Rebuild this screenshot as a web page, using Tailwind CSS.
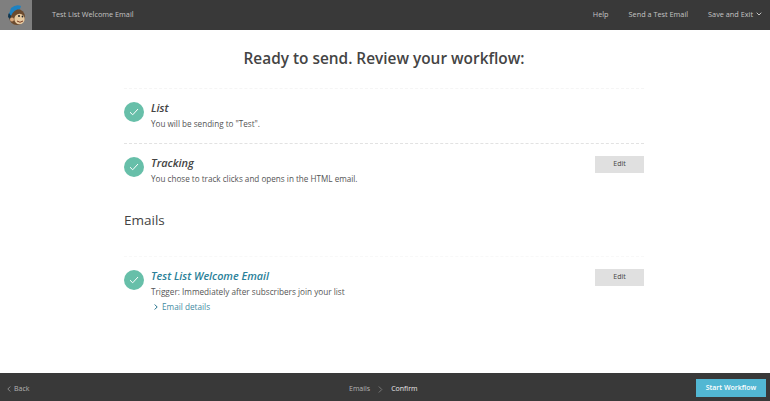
<!DOCTYPE html>
<html lang="en">
  <head>
    <meta charset="UTF-8" />
    <title>Test List Welcome Email</title>
    <script src="https://cdn.jsdelivr.net/npm/@tailwindcss/browser@4"></script>
  </head>
  <body class="font-['Open_Sans',sans-serif] bg-white text-[#444]">
    <div class="flex flex-col h-[401px] w-[770px] overflow-hidden">
      <!-- top bar -->
      <header class="flex items-center h-[30px] bg-[#393939] text-[7.3px] text-[#c4c4c4] shrink-0">
        <div class="flex items-center justify-center w-[32px] h-full bg-[#7f7f7f]">
          <svg width="22" height="24" viewBox="0 0 22 24">
            <circle cx="12" cy="14" r="8" fill="#6b4a2e" />
            <circle cx="14.5" cy="16" r="5.2" fill="#e6c9a0" />
            <path d="M4 11 L6 5 Q11 1 16 3 L15 6 Q9 6 6 13 Z" fill="#1d82c2" />
            <path d="M3 14 Q3 11 4 10 L6 13 L5 16 Z" fill="#12374f" />
            <circle cx="14" cy="13" r="1" fill="#222" />
            <circle cx="17.5" cy="13.5" r="0.9" fill="#222" />
            <path d="M12 18 Q15 20.5 18 18" stroke="#7a3b22" stroke-width="1" fill="none" />
            <circle cx="7" cy="16.5" r="2" fill="#d9a77c" />
          </svg>
        </div>
        <div class="ml-[20px] pb-[2px]">Test List Welcome Email</div>
        <nav class="flex items-center ml-auto pr-[8px] pb-[2px]">
          <a class="mr-[20px]">Help</a>
          <a class="mr-[20px]">Send a Test Email</a>
          <a class="flex items-center gap-[3px]">Save and Exit
            <svg width="6" height="4" viewBox="0 0 6 4"><path d="M0.7 0.7 L3 3 L5.3 0.7" stroke="#c4c4c4" stroke-width="1" fill="none" /></svg>
          </a>
        </nav>
      </header>

      <main class="flex-1 flex flex-col items-center pr-[2px]">
        <h1 class="mt-[17px] text-[15.4px] leading-[24px] font-semibold text-[#444]">Ready to send. Review your workflow:</h1>
        <div class="w-[520px] mt-[17px]">
          <div class="border-t border-dashed border-[#f5f5f5] h-[55px] flex items-start pt-[11px]">
            <span class="mt-[2px] flex items-center justify-center w-[20px] h-[20px] rounded-full bg-[#67bfa9] shrink-0">
              <svg width="10" height="8" viewBox="0 0 10 8"><path d="M1 4.2 L3.7 6.8 L9 1" stroke="#fff" stroke-width="1" fill="none" /></svg>
            </span>
            <div class="ml-[7px]">
              <div class="text-[11px] leading-[15px] italic font-semibold text-[#444]">List</div>
              <div class="text-[8.15px] leading-[17px] text-[#555]">You will be sending to "Test".</div>
            </div>
          </div>
          <div class="border-t border-dashed border-[#e2e2e2] flex items-start pt-[11px]">
            <span class="mt-[2px] flex items-center justify-center w-[20px] h-[20px] rounded-full bg-[#67bfa9] shrink-0">
              <svg width="10" height="8" viewBox="0 0 10 8"><path d="M1 4.2 L3.7 6.8 L9 1" stroke="#fff" stroke-width="1" fill="none" /></svg>
            </span>
            <div class="ml-[7px]">
              <div class="text-[11px] leading-[15px] italic font-semibold text-[#444]">Tracking</div>
              <div class="text-[8.15px] leading-[17px] text-[#555]">You chose to track clicks and opens in the HTML email.</div>
            </div>
            <button class="ml-auto mt-[1px] w-[49px] h-[17px] bg-[#e0e0e0] text-[7px] text-[#444]">Edit</button>
          </div>
          <h2 class="mt-[23px] text-[13.5px] leading-[20px] font-normal text-[#444]">Emails</h2>
          <div class="mt-[26px] border-t border-dashed border-[#f8f8f8] flex items-start pt-[11px]">
            <span class="mt-[2px] flex items-center justify-center w-[20px] h-[20px] rounded-full bg-[#67bfa9] shrink-0">
              <svg width="10" height="8" viewBox="0 0 10 8"><path d="M1 4.2 L3.7 6.8 L9 1" stroke="#fff" stroke-width="1" fill="none" /></svg>
            </span>
            <div class="ml-[7px]">
              <div class="text-[10.8px] leading-[15px] italic font-semibold text-[#2a7f99]">Test List Welcome Email</div>
              <div class="text-[8.2px] leading-[17px] text-[#555]">Trigger: Immediately after subscribers join your list</div>
              <div class="flex items-center text-[8.2px] leading-[13px] text-[#3f8ba3]">
                <svg class="ml-[3px] mr-[4px]" width="4" height="6" viewBox="0 0 4 6"><path d="M0.7 0.5 L3.2 3 L0.7 5.5" stroke="#1f6f8b" stroke-width="1" fill="none" /></svg>
                Email details
              </div>
            </div>
            <button class="ml-auto mt-[1px] w-[49px] h-[17px] bg-[#e0e0e0] text-[7px] text-[#444]">Edit</button>
          </div>
        </div>
      </main>

      <!-- bottom bar -->
      <footer class="relative flex items-center justify-between h-[28px] pt-[2px] bg-[#393939] text-[7px] text-[#b5b5b5] shrink-0">
        <a class="flex items-center ml-[7px] pt-[2px]">
          <svg class="mr-[3px]" width="4" height="6" viewBox="0 0 4 6"><path d="M3.3 0.5 L0.8 3 L3.3 5.5" stroke="#8a8a8a" stroke-width="1" fill="none" /></svg>
          Back
        </a>
        <div class="absolute left-[349px] flex items-center pt-[2px]">
          <span>Emails</span>
          <svg class="ml-[8px] mr-[8px]" width="5" height="7" viewBox="0 0 5 7"><path d="M0.8 0.5 L3.8 3.5 L0.8 6.5" stroke="#777" stroke-width="1" fill="none" /></svg>
          <span class="text-[#e8e8e8]">Confirm</span>
        </div>
        <button class="mr-[4px] w-[70px] h-[18px] bg-[#52b7d3] text-white text-[7px] font-semibold">Start Workflow</button>
      </footer>
    </div>
  </body>
</html>
